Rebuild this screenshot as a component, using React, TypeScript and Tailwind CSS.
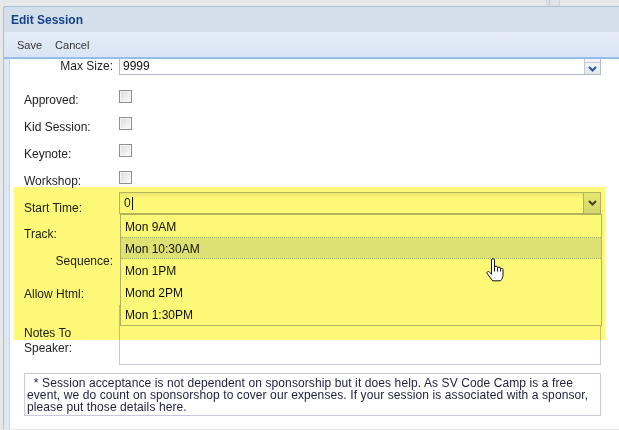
const font = "font-['Liberation_Sans',Arial,sans-serif]";

function Checkbox() {
  return (
    <div className="h-[13px] w-[13px] border border-[#8e8f8f] bg-gradient-to-br from-[#dcdcdc] to-[#fbfbfb] shadow-[inset_0_0_0_1px_#f4f4f4]" />
  );
}

function Chevron({ color }: { color: string }) {
  return (
    <svg width="9" height="6" viewBox="0 0 9 6">
      <path d="M1 1l3.5 3.5L8 1" fill="none" stroke={color} strokeWidth="2" />
    </svg>
  );
}

function HandCursor() {
  return (
    <svg width="18" height="25" viewBox="0 0 18 25" className="absolute left-[486px] top-[258px]">
      <path
        d="M5.5 15V2.2a1.5 1.5 0 0 1 3 0V9.6a1.5 1.5 0 0 1 3 0v1a1.5 1.5 0 0 1 3 0v1a1.25 1.25 0 0 1 2.5 0v5c0 2.6-1 4.6-2.5 6.2H6.6L1.3 15.7a1.3 1.3 0 0 1 2-1.7L5.5 16.2Z"
        fill="#fff"
        stroke="#111"
        strokeWidth="1"
        strokeLinejoin="round"
      />
      <path d="M8.5 9.6V13.5M11.5 10.6V13.5M14.5 11.6V13.5" stroke="#111" strokeWidth="1" />
    </svg>
  );
}

const times = ["Mon 9AM", "Mon 10:30AM", "Mon 1PM", "Mond 2PM", "Mon 1:30PM"];

function Row({
  label,
  h,
  pt,
  right,
  children,
}: {
  label: React.ReactNode;
  h: string;
  pt: string;
  right?: boolean;
  children?: React.ReactNode;
}) {
  return (
    <div className={`flex ${h}`}>
      <div className={`w-[95px] shrink-0 text-[12px] leading-[15px] text-[#222] ${pt} ${right ? "pr-[6px] text-right" : ""}`}>
        {label}
      </div>
      <div className="w-[482px] shrink-0">{children}</div>
    </div>
  );
}

export default function App() {
  return (
    <div className={`relative h-[430px] w-[619px] overflow-hidden bg-[#e8e8e8] ${font}`}>
      <div className="relative h-[6px]">
        <div className="absolute left-[546px] top-0 h-[6px] w-[14px] border-x border-[#d0d4da] bg-[#dfe2e6]">
          <div className="ml-[2px] h-full w-[1px] bg-[#c8ccd2]" />
        </div>
      </div>

      <div className="ml-[3px] rounded-tl-[3px] border-l border-t border-[#a9bfd6] bg-[#d3dfeb]">
        <div className="flex h-[25px] items-center pl-[7px] text-[12px] font-bold text-[#15428b]">Edit Session</div>

        <div className="flex h-[27px] items-center gap-[13px] border-b-2 border-[#99bbe8] bg-gradient-to-b from-[#e4ecf7] to-[#d9e6f5] pl-[13px] pt-[1px] text-[11px] text-[#333]">
          <span>Save</span>
          <span>Cancel</span>
        </div>

        <div className="bg-[#dfe8f6] pl-[5px]">
          <div className="relative h-[370px] overflow-hidden border-l border-[#c5d5ea] bg-white pl-[14px]">
            <Row label="Max Size:" h="h-[16px]" pt="pt-[0px]" right>
              <div className="flex h-[16px] border-x border-b border-[#b5b8c8]">
                <div className="flex-1 pl-[3px] text-[12px] leading-[14px] text-[#111]">9999</div>
                <div className="flex w-[16px] flex-col border-l border-[#c6c9d4] bg-gradient-to-b from-[#f4f6f9] to-[#e3e8ef]">
                  <div className="h-[4px] border-b border-[#c6c9d4]" />
                  <div className="flex flex-1 items-center justify-center">
                    <Chevron color="#2a5aa8" />
                  </div>
                </div>
              </div>
            </Row>

            <div className="mt-[8px]" />
            {["Approved:", "Kid Session:", "Keynote:", "Workshop:"].map((l) => (
              <Row key={l} label={l} h="h-[27px]" pt="pt-[10px]">
                <div className="flex h-[27px] items-center">
                  <Checkbox />
                </div>
              </Row>
            ))}

            <Row label="Start Time:" h="h-[24px]" pt="pt-[10px]">
              <div className="mt-[1px] flex h-[22px] border border-[#b5b8c8] bg-gradient-to-b from-[#f0f0f0] to-white to-[30%]">
                <div className="flex flex-1 items-center pl-[4px] text-[12px] text-[#111]">
                  0<span className="ml-[1px] h-[13px] w-[1px] bg-[#111]" />
                </div>
                <div className="flex w-[17px] items-center justify-center border-l border-[#b5b8c8] bg-gradient-to-b from-[#e9edf2] to-[#d5dde7]">
                  <Chevron color="#3d4652" />
                </div>
              </div>
            </Row>

            <Row label="Track:" h="h-[27px]" pt="pt-[12px]" />
            <Row label="Sequence:" h="h-[27px]" pt="pt-[12px]" right />
            <Row label="Allow Html:" h="h-[33px]" pt="pt-[18px]" />
            <Row label={<>Notes To<br />Speaker:</>} h="h-[64px]" pt="pt-[24px]">
              <div className="mt-[3px] h-[60px] border border-[#c3c6d3]" />
            </Row>

            <div className="mt-[7px] h-[43px] w-[577px] border border-[#c8c8d8] px-[2px] pt-[3px] text-[12px] leading-[12px] tracking-[0.1px] text-[#1e1e3c] whitespace-pre">
              {"  * Session acceptance is not dependent on sponsorship but it does help. As SV Code Camp is a free\nevent, we do count on sponsorshop to cover our expenses. If your session is associated with a sponsor,\nplease put those details here."}
            </div>

            <div className="absolute left-[110px] top-[155px] w-[482px] border border-[#b5b8c8] bg-white">
              {times.map((t, i) => (
                <div
                  key={t}
                  className={`flex h-[22px] items-center pl-[4px] pt-[2px] text-[12px] text-[#111] ${
                    i === 1 ? "border-y border-dotted border-[#a3bae9] bg-[#dfe8f6]" : ""
                  }`}
                >
                  {t}
                </div>
              ))}
            </div>
          </div>
        </div>
      </div>

      <div className="pointer-events-none absolute left-[14px] top-[187px] h-[153px] w-[591px] bg-[#fdf877] mix-blend-multiply" />
      <HandCursor />
    </div>
  );
}
